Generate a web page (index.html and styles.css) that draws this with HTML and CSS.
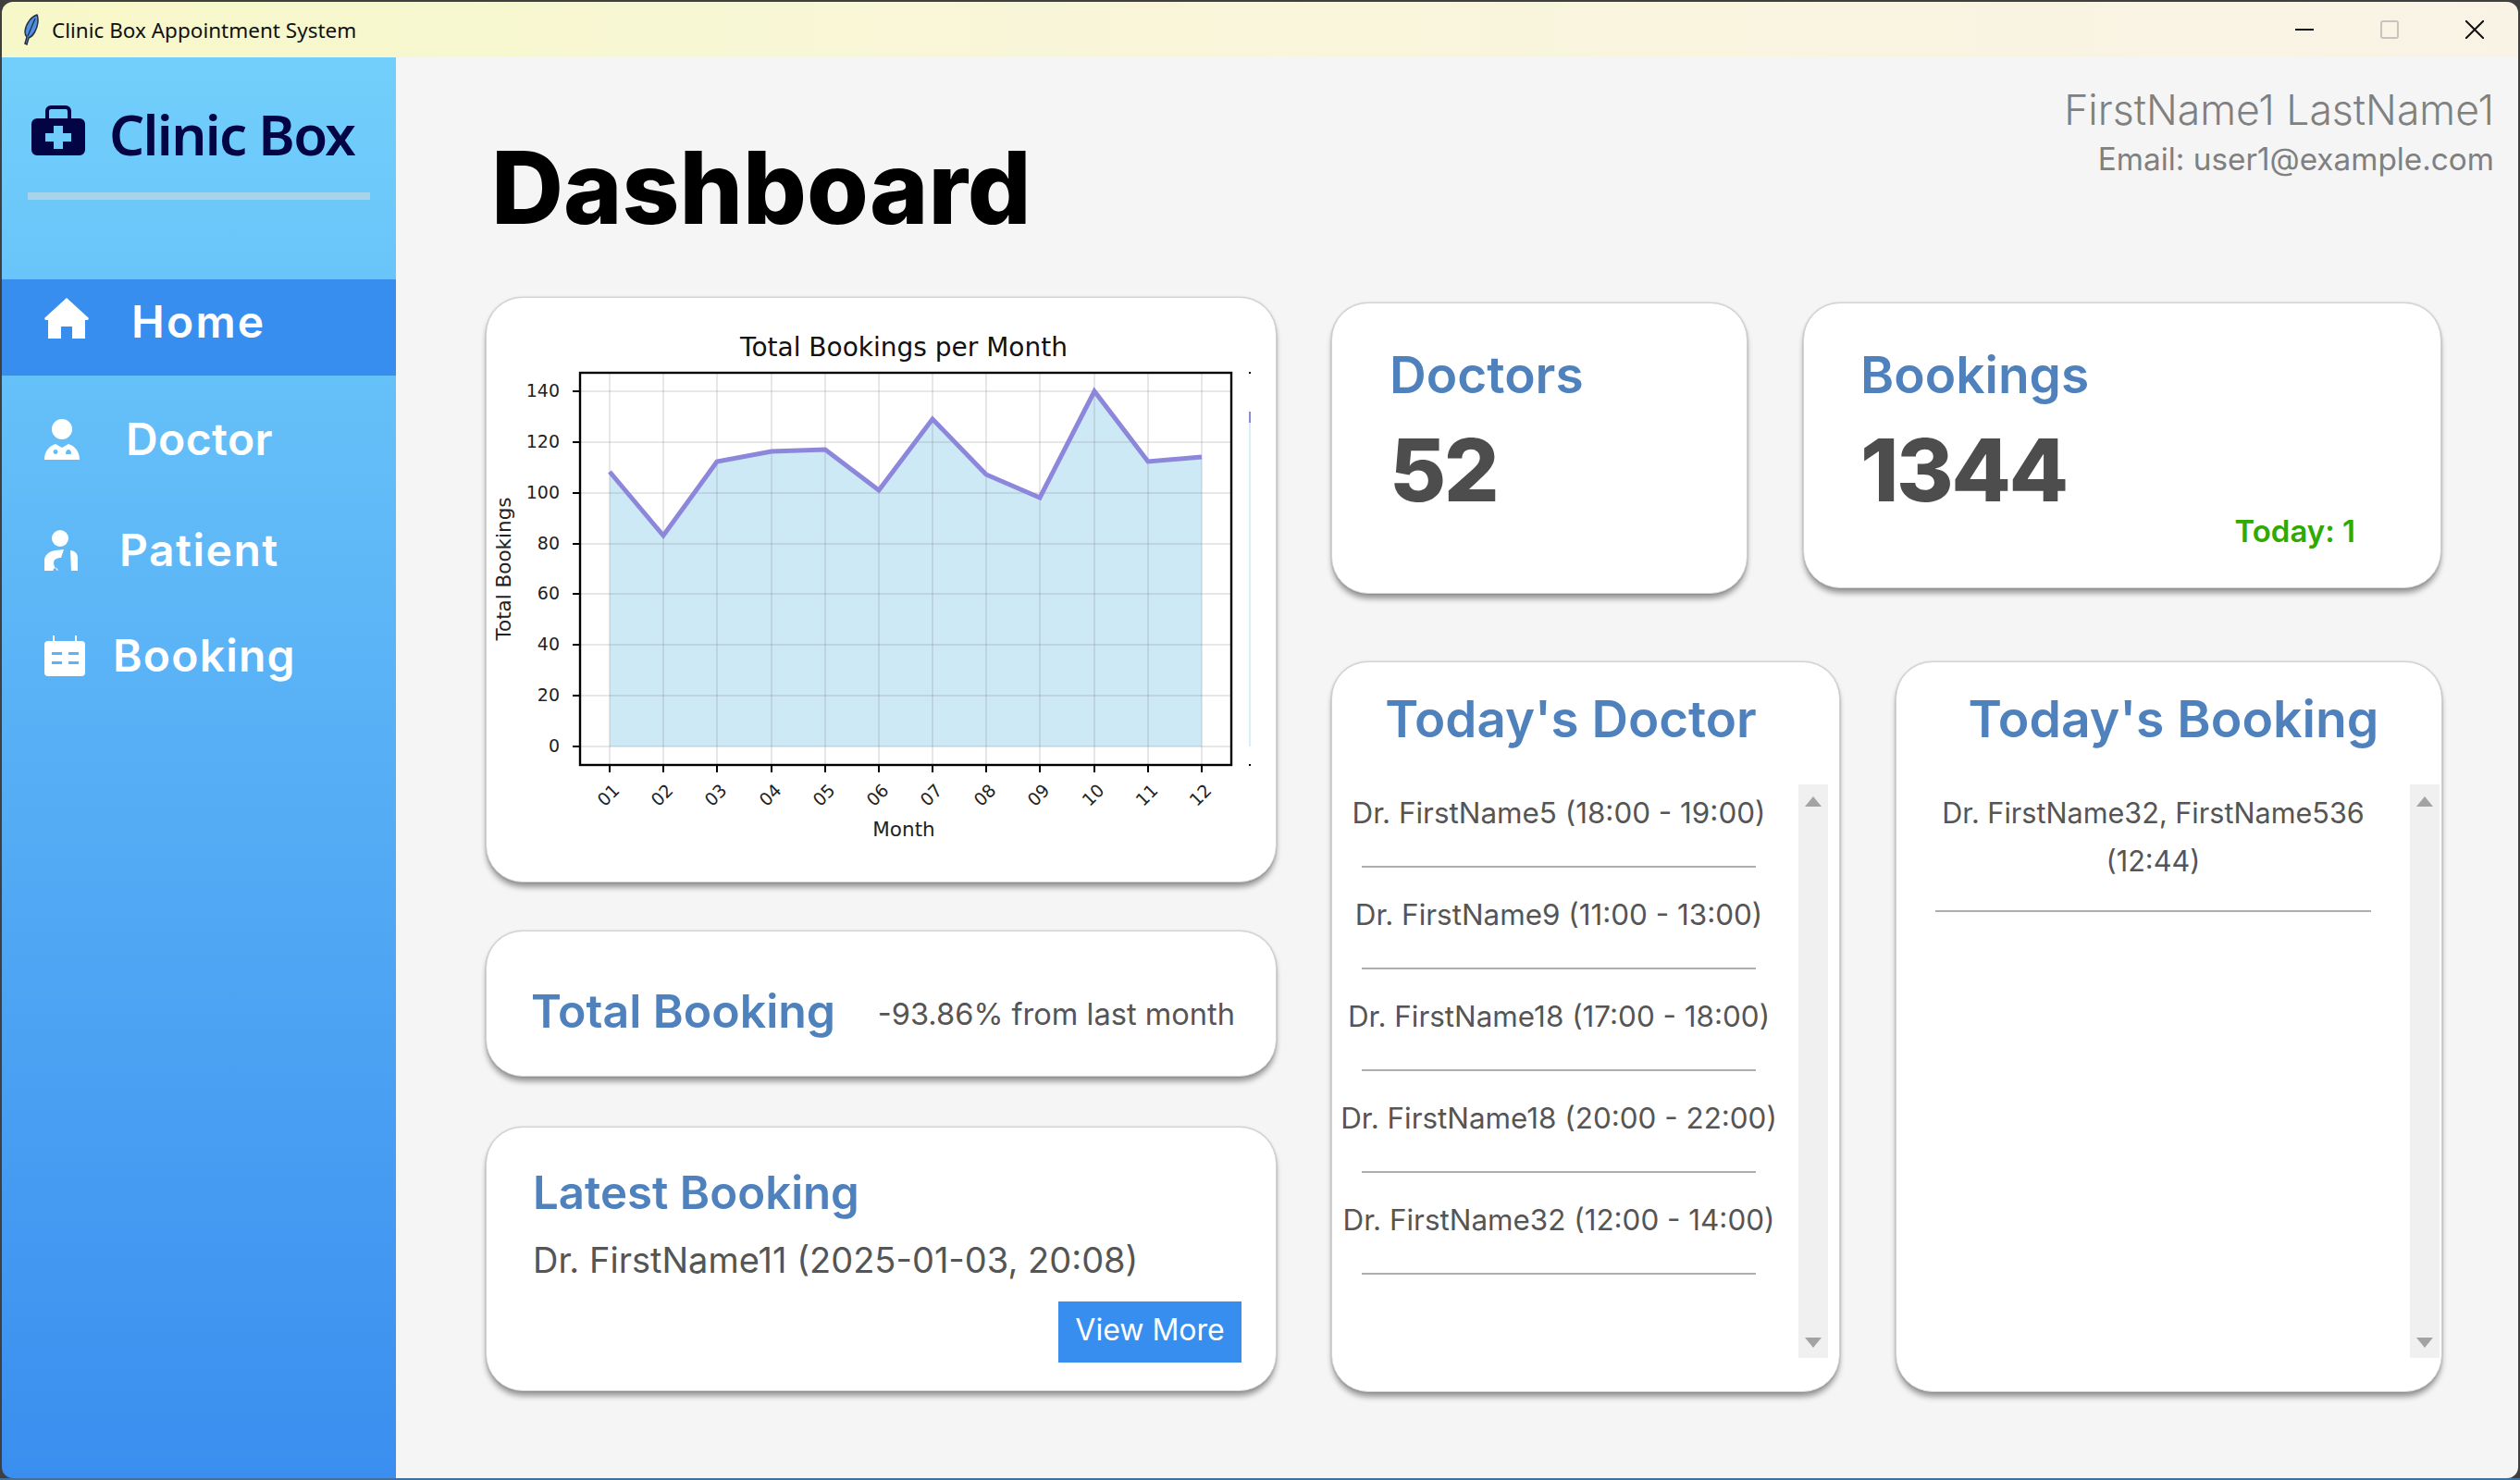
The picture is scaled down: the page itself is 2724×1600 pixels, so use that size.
FILE: index.html
```html
<!DOCTYPE html>
<html>
<head>
  <meta charset="utf-8" />
  <title>Clinic Box Appointment System</title>
  <link rel="stylesheet" href="styles.css">
</head>
<body>
  <div class="window">
    <div class="titlebar">
      <svg class="feather" width="20" height="34" viewBox="0 0 20 34">
        <path d="M16 1C10 3 4 10 3 19c0 3 1 5 2 6l-2 7 2 1 2-7c5-2 9-9 10-17 0-4 0-7-1-8z" fill="#4f8fe0" stroke="#26303f" stroke-width="1.5"/>
        <path d="M14 5 6 24" stroke="#1c2a44" stroke-width="1.2" fill="none"/>
      </svg>
      <span class="titlebar-text">Clinic Box Appointment System</span>
      <div class="win-controls">
        <span class="win-btn"><svg width="20" height="20" viewBox="0 0 20 20"><path d="M0 10h20" stroke="#111" stroke-width="2"/></svg></span>
        <span class="win-btn"><svg width="20" height="20" viewBox="0 0 20 20"><rect x="1" y="1" width="18" height="18" rx="2" fill="none" stroke="#c6c4bd" stroke-width="2"/></svg></span>
        <span class="win-btn"><svg width="20" height="20" viewBox="0 0 20 20"><path d="M0 0l20 20M20 0 0 20" stroke="#111" stroke-width="2"/></svg></span>
      </div>
    </div>

    <div class="app">
      <aside class="sidebar">
        <div class="logo">
          <svg width="58" height="54" viewBox="0 0 58 54">
            <path fill="#020444" fill-rule="evenodd" d="M6 14h9V6a6 6 0 0 1 6-6h16a6 6 0 0 1 6 6v8h9a6 6 0 0 1 6 6v28a6 6 0 0 1-6 6H6a6 6 0 0 1-6-6V20a6 6 0 0 1 6-6zM19 14h20V6a2 2 0 0 0-2-2H21a2 2 0 0 0-2 2zM24 22v8h-9v9h9v8h10v-8h9v-9h-9v-8z"/>
          </svg>
          <span class="logo-text">Clinic Box</span>
        </div>
        <div class="logo-rule"></div>
        <nav class="nav">
          <a class="nav-item nav-home active">
            <svg width="48" height="44" viewBox="0 0 48 44"><path fill="#fff" fill-rule="evenodd" d="M24 0 48 22l-1 2h-3v20H30V31H18v13H4V24H1l-1-2z"/></svg>
            <span class="nav-label">Home</span>
          </a>
          <a class="nav-item nav-doctor">
            <svg width="38" height="44" viewBox="0 0 38 44"><circle cx="19" cy="11" r="11" fill="#fff"/><path fill="#fff" fill-rule="evenodd" d="M0 44c0-9 5-15 12-17l7 4 7-4c7 2 12 8 12 17zM12 33a2.5 2.5 0 1 0 .1 0zM26 33c-2 0-3 2-3 5h6c0-3-1-5-3-5z"/></svg>
            <span class="nav-label">Doctor</span>
          </a>
          <a class="nav-item nav-patient">
            <svg width="36" height="44" viewBox="0 0 36 44"><circle cx="17" cy="9" r="9" fill="#fff"/><path fill="#fff" fill-rule="evenodd" d="M0 44V33c0-6 5-10 12-11l9-1-3 9c-5 0-8 2-8 6 0 3 2 5 4 8zM12 41a2.5 2.5 0 1 0 .1 0z"/><path fill="#fff" d="M28 22c4 0 8 3 8 8v14h-7z"/></svg>
            <span class="nav-label">Patient</span>
          </a>
          <a class="nav-item nav-booking">
            <svg width="44" height="44" viewBox="0 0 44 44"><path fill="#fff" fill-rule="evenodd" d="M9 0h2v6h22V0h2v6h5a4 4 0 0 1 4 4v30a4 4 0 0 1-4 4H4a4 4 0 0 1-4-4V10a4 4 0 0 1 4-4h5zM8 18v3h11v-3zM26 18v3h11v-3zM8 28v3h11v-3zM26 28v3h11v-3z"/></svg>
            <span class="nav-label">Booking</span>
          </a>
        </nav>
      </aside>

      <main class="main">
        <header class="top">
          <h1 class="page-title">Dashboard</h1>
          <div class="user">
            <div class="user-name">FirstName1 LastName1</div>
            <div class="user-email">Email: user1@example.com</div>
          </div>
        </header>

        <div class="columns">
          <section class="left-col">
            <div class="card chart-card">
              <svg class="chart" width="852" height="590" viewBox="526 341 852 590">
                <text class="c-title" x="977" y="385" text-anchor="middle">Total Bookings per Month</text>

                <polygon points="659,510 717,579 775,499 834,488 892,486 950,530 1008,453 1066,513 1124,538 1183,423 1241,499 1299,494 1299,807 659,807" fill="#cde9f6"/>

                <g class="c-grid">
                  <path d="M626 423h705M626 478h705M626 533h705M626 588h705M626 642h705M626 697h705M626 752h705M626 807h705"/>
                  <path d="M659 403v424M717 403v424M775 403v424M834 403v424M892 403v424M950 403v424M1008 403v424M1066 403v424M1124 403v424M1183 403v424M1241 403v424M1299 403v424"/>
                </g>

                <polyline points="659,510 717,579 775,499 834,488 892,486 950,530 1008,453 1066,513 1124,538 1183,423 1241,499 1299,494" fill="none" stroke="#8d87db" stroke-width="5"/>

                <rect x="627" y="403" width="704" height="424" fill="none" stroke="#000" stroke-width="2.4"/>

                <g class="c-ticks">
                  <path d="M619 423h8M619 478h8M619 533h8M619 588h8M619 642h8M619 697h8M619 752h8M619 807h8"/>
                  <path d="M659 827v8M717 827v8M775 827v8M834 827v8M892 827v8M950 827v8M1008 827v8M1066 827v8M1124 827v8M1183 827v8M1241 827v8M1299 827v8"/>
                </g>

                <path d="M1350 403h2M1350 827h2" stroke="#000" stroke-width="2"/>
                <path d="M1351 445v12" stroke="#8d87db" stroke-width="2"/>
                <path d="M1351 457v350" stroke="#d8eef8" stroke-width="2"/>

                <g class="c-label" text-anchor="end">
                  <text x="605" y="429">140</text>
                  <text x="605" y="484">120</text>
                  <text x="605" y="539">100</text>
                  <text x="605" y="594">80</text>
                  <text x="605" y="648">60</text>
                  <text x="605" y="703">40</text>
                  <text x="605" y="758">20</text>
                  <text x="605" y="813">0</text>
                </g>

                <g class="c-label" text-anchor="middle">
                  <text transform="translate(658 860) rotate(-45)" y="6">01</text>
                  <text transform="translate(716 860) rotate(-45)" y="6">02</text>
                  <text transform="translate(774 860) rotate(-45)" y="6">03</text>
                  <text transform="translate(833 860) rotate(-45)" y="6">04</text>
                  <text transform="translate(891 860) rotate(-45)" y="6">05</text>
                  <text transform="translate(949 860) rotate(-45)" y="6">06</text>
                  <text transform="translate(1007 860) rotate(-45)" y="6">07</text>
                  <text transform="translate(1065 860) rotate(-45)" y="6">08</text>
                  <text transform="translate(1123 860) rotate(-45)" y="6">09</text>
                  <text transform="translate(1182 860) rotate(-45)" y="6">10</text>
                  <text transform="translate(1240 860) rotate(-45)" y="6">11</text>
                  <text transform="translate(1298 860) rotate(-45)" y="6">12</text>
                </g>

                <text class="c-axis" x="977" y="904" text-anchor="middle">Month</text>
                <text class="c-axis" transform="translate(552 615) rotate(-90)" text-anchor="middle">Total Bookings</text>
              </svg>
            </div>

            <div class="card total-card">
              <span class="card-heading">Total Booking</span>
              <span class="total-change">-93.86% from last month</span>
            </div>

            <div class="card latest-card">
              <div class="card-heading">Latest Booking</div>
              <div class="latest-text">Dr. FirstName11 (2025-01-03, 20:08)</div>
              <div class="latest-foot"><button class="view-more">View More</button></div>
            </div>
          </section>

          <section class="right-col">
            <div class="stats-row">
              <div class="card stat-card stat-doctors">
                <div class="stat-heading">Doctors</div>
                <div class="stat-value">52</div>
              </div>
              <div class="card stat-card stat-bookings">
                <div class="stat-heading">Bookings</div>
                <div class="stat-value">1344</div>
                <div class="stat-today">Today: 1</div>
              </div>
            </div>

            <div class="lists-row">
              <div class="card list-card list-doctor">
                <h2 class="list-title">Today's Doctor</h2>
                <div class="list-body">
                  <ul class="list">
                    <li><span>Dr. FirstName5 (18:00 - 19:00)</span></li>
                    <li><span>Dr. FirstName9 (11:00 - 13:00)</span></li>
                    <li><span>Dr. FirstName18 (17:00 - 18:00)</span></li>
                    <li><span>Dr. FirstName18 (20:00 - 22:00)</span></li>
                    <li><span>Dr. FirstName32 (12:00 - 14:00)</span></li>
                  </ul>
                  <div class="scrollbar"><span class="arrow-up"></span><span class="arrow-down"></span></div>
                </div>
              </div>
              <div class="card list-card list-booking">
                <h2 class="list-title">Today's Booking</h2>
                <div class="list-body">
                  <ul class="list">
                    <li><span>Dr. FirstName32, FirstName536<br>(12:44)</span></li>
                  </ul>
                  <div class="scrollbar"><span class="arrow-up"></span><span class="arrow-down"></span></div>
                </div>
              </div>
            </div>
          </section>
        </div>
      </main>
    </div>
  </div>
</body>
</html>
```

FILE: styles.css
```css
* { box-sizing: border-box; }
html, body { margin: 0; height: 100%; }
body {
  font-family: Inter, "Open Sans", sans-serif;
  overflow: hidden;
}

.window {
  height: 1600px;
  padding: 2px;
  display: flex;
  flex-direction: column;
  background: linear-gradient(180deg, #3f3f3f 1598px, #41709f 1598px);
}

/* title bar */
.titlebar {
  height: 60px;
  flex: none;
  display: flex;
  align-items: center;
  padding-left: 22px;
  background: linear-gradient(90deg, #f7f8c9 0%, #f8f6d8 40%, #f9f3e6 100%);
  border-radius: 12px 12px 0 0;
}
.feather { margin-right: 12px; }
.titlebar-text {
  font-family: "Noto Sans", sans-serif;
  font-size: 22.5px;
  color: #111;
}
.win-controls { margin-left: auto; display: flex; padding-right: 1px; }
.win-btn {
  width: 92px;
  height: 40px;
  display: flex;
  align-items: center;
  justify-content: center;
}

/* sidebar */
.app {
  flex: 1;
  display: flex;
  min-height: 0;
  border-radius: 0 0 12px 12px;
  overflow: hidden;
}
.sidebar {
  width: 426px;
  flex: none;
  background: linear-gradient(180deg, #72cffb 0%, #3a8eef 100%);
  padding-top: 52px;
}
.logo {
  display: flex;
  align-items: center;
  gap: 26px;
  height: 54px;
  padding-left: 32px;
}
.logo-text {
  font-family: "Noto Sans", sans-serif;
  font-weight: 600;
  font-size: 60px;
  line-height: 54px;
  color: #020444;
  letter-spacing: -1.7px;
  padding-top: 7px;
}
.logo-rule {
  height: 8px;
  margin: 40px 28px 0 28px;
  background: #a8d4ea;
}

.nav { margin-top: 86px; }
.nav-item {
  display: flex;
  align-items: center;
  padding-left: 46px;
  color: #fff;
}
.nav-label {
  font-size: 48px;
  font-weight: 600;
  line-height: 60px;
  letter-spacing: 1.5px;
}
.nav-home { height: 104px; background: #378eef; padding-bottom: 12px; }
.nav-home svg { margin-bottom: 8px; }
.nav-home .nav-label { margin-left: 46px; letter-spacing: 2.2px; }
.nav-doctor { margin-top: 39px; }
.nav-doctor .nav-label { margin-left: 50px; letter-spacing: 0.4px; }
.nav-patient { margin-top: 60px; }
.nav-patient .nav-label { margin-left: 45px; }
.nav-booking { margin-top: 54px; }
.nav-booking .nav-label { margin-left: 30px; letter-spacing: 1.2px; }

/* main area */
.main { flex: 1; background: #f5f5f5; min-width: 0; }
.top {
  height: 259px;
  display: flex;
  justify-content: space-between;
  align-items: flex-start;
  padding: 0 26px 0 103px;
}
.page-title {
  margin: 76px 0 0 0;
  font-size: 108px;
  line-height: 130px;
  font-weight: 800;
  color: #000;
}
.user { text-align: right; padding-top: 28px; color: #808080; }
.user-name { font-size: 44.5px; line-height: 58px; font-weight: 300; }
.user-email { font-size: 33.3px; line-height: 48px; font-weight: 400; }

.columns { display: flex; padding-left: 97px; }
.card {
  background: #fff;
  border-radius: 40px;
  border: 1px solid #d2d2d2;
  box-shadow: 0 6px 6px -1px rgba(0, 0, 0, 0.4), 0 0 2px rgba(0, 0, 0, 0.25);
}

.left-col { width: 855px; flex: none; }
.chart-card { height: 633px; }
.chart { display: block; margin: 19px 0 0 0; }
.c-title { font-family: "DejaVu Sans", sans-serif; font-size: 28px; fill: #111; }
.c-label { font-family: "DejaVu Sans", sans-serif; font-size: 19px; fill: #222; }
.c-axis { font-family: "DejaVu Sans", sans-serif; font-size: 21.5px; fill: #222; }
.c-grid path { stroke: rgba(120, 120, 120, 0.18); stroke-width: 2; fill: none; }
.c-ticks path { stroke: #000; stroke-width: 2; fill: none; }

.card-heading {
  font-size: 50px;
  font-weight: 600;
  line-height: 60px;
  color: #4f81bd;
}
.latest-card .card-heading { font-size: 49.2px; }
.total-card {
  height: 158px;
  margin-top: 52px;
  display: flex;
  align-items: center;
  justify-content: space-between;
  padding: 16px 44px 0 48px;
}
.total-change { font-size: 32.6px; color: #555; padding-top: 6px; }

.latest-card { height: 286px; margin-top: 54px; padding: 40px 37px 0 50px; }
.latest-text { font-size: 38px; line-height: 50px; color: #555; margin-top: 18px; }
.latest-foot { display: flex; justify-content: flex-end; margin-top: 20px; }
.view-more {
  width: 198px;
  height: 66px;
  border: none;
  background: #378eef;
  color: #fff;
  font-family: inherit;
  font-size: 32px;
  padding: 0 0 5px;
}

.right-col { margin-left: 59px; padding-top: 6px; }
.stats-row { display: flex; align-items: flex-start; gap: 60px; }
.stat-card { position: relative; padding: 42px 0 0 62px; }
.stat-doctors { width: 450px; height: 315px; }
.stat-bookings { width: 690px; height: 309px; padding-left: 61px; }
.stat-heading {
  font-size: 55px;
  font-weight: 600;
  line-height: 70px;
  color: #4f81bd;
}
.stat-value {
  font-size: 94px;
  font-weight: 800;
  letter-spacing: -2.5px;
  line-height: 110px;
  color: #4d4d4d;
  margin-top: 13px;
}
.stat-today {
  position: absolute;
  right: 92px;
  top: 226px;
  font-size: 33px;
  font-weight: 600;
  color: #2eaa00;
}

.lists-row { display: flex; gap: 60px; margin-top: 73px; }
.list-card { height: 790px; }
.list-doctor { width: 550px; }
.list-booking { width: 591px; }
.list-title {
  margin: 0;
  padding-top: 26px;
  height: 132px;
  text-align: center;
  font-size: 54.7px;
  font-weight: 600;
  line-height: 70px;
  color: #4f81bd;
}
.list-doctor .list-title { padding-right: 32px; }
.list-booking .list-title { padding-left: 10px; font-size: 55.3px; }
.list-body { display: flex; padding-right: 12px; }
.list-booking .list-body { padding-right: 2px; }
.list {
  list-style: none;
  margin: 0;
  padding: 0;
  flex: 1;
  min-width: 0;
}
.list li {
  display: flex;
  justify-content: center;
  text-align: center;
  margin: 20px 46px 0 32px;
  padding-top: 5px;
  height: 90px;
  border-bottom: 2px solid #aeaeae;
  font-size: 31.4px;
  line-height: 52px;
  color: #555;
  white-space: nowrap;
}
.list li:first-child { margin-top: 0; }
.list-booking .list li {
  margin: 0 42px;
  height: 138px;
  font-size: 30.6px;
}
.scrollbar {
  width: 32px;
  height: 620px;
  flex: none;
  background: #f0f0f0;
  display: flex;
  flex-direction: column;
  justify-content: space-between;
  align-items: center;
  padding: 13px 0 11px;
}
.arrow-up, .arrow-down {
  width: 0;
  height: 0;
  border-left: 9px solid transparent;
  border-right: 9px solid transparent;
}
.arrow-up { border-bottom: 11px solid #a3a3a3; }
.arrow-down { border-top: 11px solid #a3a3a3; }
```
